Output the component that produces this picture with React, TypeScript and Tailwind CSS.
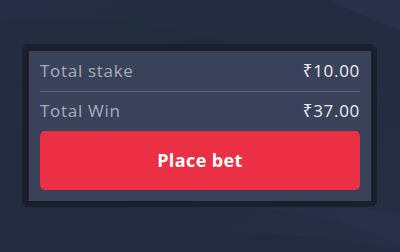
import React from "react";

export default function App() {
  return (
    <div className="relative w-[400px] h-[252px] overflow-hidden bg-[#232b3f]" style={{ fontFamily: '"Open Sans", "Noto Sans", sans-serif' }}>
      <svg className="absolute inset-0" width="400" height="252" viewBox="0 0 400 252">
        <defs>
          <linearGradient id="g" x1="0" y1="0" x2="1" y2="1">
            <stop offset="0" stopColor="#242c41" />
            <stop offset="0.5" stopColor="#222a3d" />
            <stop offset="1" stopColor="#262f45" />
          </linearGradient>
        </defs>
        <rect width="400" height="252" fill="url(#g)" />
        <path d="M0 22 C 80 12, 170 25, 260 50 S 380 90, 400 95 L400 0 L0 0Z" fill="#243049" opacity="0.35" />
        <path d="M330 0 C 360 15, 385 25, 400 30 L400 0Z" fill="#2a3550" opacity="0.5" />
        <path d="M0 225 C 120 238, 260 222, 400 250 L400 252 L0 252Z" fill="#232a3d" opacity="0.5" />
        <path d="M250 205 C 320 215, 370 230, 400 245 L400 215 C 360 205, 300 200, 250 205Z" fill="#29324a" opacity="0.5" />
      </svg>
      <div className="relative pt-[44px] pl-[22px]">
        <div className="w-[355px] rounded-[7px] bg-[#1b1f2b] pl-[7px] pt-[7px] pr-[6px] pb-[6px]">
          <div className="bg-[#3a4259] px-[11px] pb-[11px]">
            <div className="h-[40px] flex items-center justify-between text-[17px] tracking-[0.7px]">
              <span className="text-[#a6adbf]">Total stake</span>
              <span className="text-[#eceef3]">₹10.00</span>
            </div>
            <div className="h-px bg-[#5b6378]" />
            <div className="h-[38px] flex items-center justify-between text-[17px] tracking-[0.7px]">
              <span className="text-[#a6adbf]">Total Win</span>
              <span className="text-[#eceef3]">₹37.00</span>
            </div>
            <button className="mt-px w-full h-[59px] rounded-[5px] bg-[#eb2f45] text-white font-bold text-[18px] tracking-[0.4px] flex items-center justify-center">
              Place bet
            </button>
          </div>
        </div>
      </div>
    </div>
  );
}
